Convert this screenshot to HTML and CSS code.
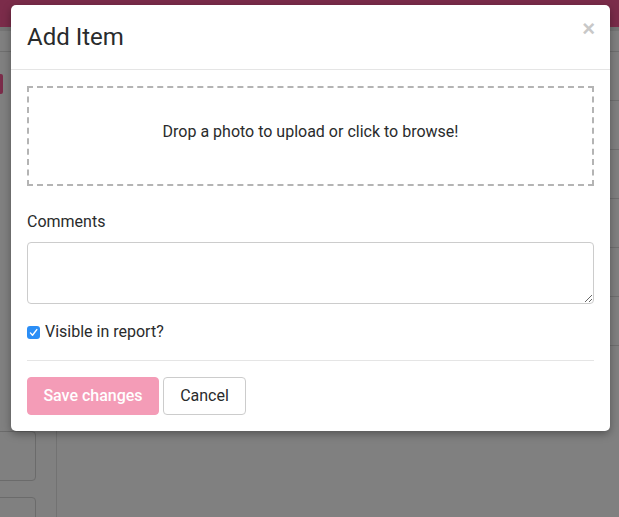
FILE: index.html
```html
<!DOCTYPE html>
<html lang="en">
<head>
<meta charset="utf-8">
<title>Add Item</title>
<link rel="stylesheet" href="styles.css">
</head>
<body>
<div class="app">
  <div class="topbar"></div>
  <div class="subbar"></div>
  <div class="main">
    <aside class="sidebar">
      <div class="side-top"></div>
      <div class="side-btn"></div>
      <div class="side-spacer"></div>
      <div class="side-card"></div>
      <div class="side-card"></div>
    </aside>
    <section class="content">
      <div class="row"></div>
      <div class="row"></div>
      <div class="row"></div>
      <div class="row"></div>
      <div class="row"></div>
      <div class="row"></div>
      <div class="row"></div>
    </section>
  </div>
</div>

<div class="modal">
  <div class="modal-header">
    <h4 class="modal-title">Add Item</h4>
    <span class="close">&times;</span>
  </div>
  <div class="modal-body">
    <div class="dropzone">Drop a photo to upload or click to browse!</div>
    <div class="form-group">
      <label class="label" for="comments">Comments</label>
      <textarea id="comments" class="textarea"></textarea>
    </div>
    <label class="check-row">
      <span class="checkbox"><svg viewBox="0 0 13 13" width="13" height="13"><path d="M3.4 6.9 L5.5 9.2 L9.8 3.6" fill="none" stroke="#fff" stroke-width="1.4" stroke-linecap="round" stroke-linejoin="round"/></svg></span>
      <span>Visible in report?</span>
    </label>
    <hr class="divider">
    <div class="actions">
      <button class="btn btn-primary" type="button">Save changes</button>
      <button class="btn btn-default" type="button">Cancel</button>
    </div>
  </div>
</div>
</body>
</html>
```

FILE: styles.css
```css
* { box-sizing: border-box; }
html, body { margin: 0; padding: 0; }
body {
  width: 619px;
  height: 517px;
  overflow: hidden;
  background: #808080;
  font-family: Roboto, "Liberation Sans", sans-serif;
  color: #292b2c;
  font-size: 16px;
  line-height: 1.5;
}
.app { display: flex; flex-direction: column; height: 517px; overflow: hidden; }
.topbar { height: 27px; background: #7b2c4a; flex: none; }
.subbar { height: 4px; background: #757575; flex: none; }
.main { display: flex; flex: 1; min-height: 0; overflow: hidden; }
.sidebar {
  width: 57px;
  flex: none;
  border-right: 1px solid #727272;
  display: flex;
  flex-direction: column;
}
.side-top { height: 21px; border-bottom: 1px solid #6f6f6f; width: 12px; flex: none; }
.side-btn { margin-top: 22px; height: 20px; width: 3px; background: #7b2c4a; border-radius: 0 2px 2px 0; flex: none; }
.side-spacer { height: 337px; flex: none; }
.side-card {
  flex: none;
  margin-left: -6px;
  width: 42px;
  height: 50px;
  border: 1px solid #6b6b6b;
  border-radius: 4px;
  margin-bottom: 16px;
}
.content { flex: 1; display: flex; flex-direction: column; }
.row { height: 49px; border-top: 1px solid #6f6f6f; flex: none; }
.row:first-child { margin-top: 20px; }

.modal {
  position: absolute;
  left: 11px;
  top: 5px;
  width: 599px;
  background: #fff;
  border-radius: 5px;
  box-shadow: 0 3px 9px rgba(0, 0, 0, 0.35);
}
.modal-header {
  display: flex;
  align-items: flex-start;
  justify-content: space-between;
  padding: 16px;
  border-bottom: 1px solid #e5e5e5;
}
.modal-title {
  margin: 0;
  font-size: 24px;
  font-weight: 400;
  line-height: 32px;
  color: #292b2c;
}
.close {
  font-size: 22px;
  line-height: 16px;
  font-weight: 700;
  color: #c8c8c8;
  margin-top: 0;
  margin-right: -1px;
  font-family: "Liberation Sans", sans-serif;
}
.modal-body { padding: 16px; }
.dropzone {
  height: 100px;
  border: 2px dashed #b4b4b4;
  display: flex;
  align-items: center;
  justify-content: center;
  padding-bottom: 8px;
  font-size: 16px;
  color: #292b2c;
}
.form-group { margin-top: 24px; }
.label { display: block; margin-bottom: 8px; font-size: 16px; line-height: 24px; }
.textarea {
  display: block;
  width: 100%;
  height: 62px;
  border: 1px solid #cccccc;
  border-radius: 4px;
  resize: vertical;
  font: inherit;
}
.check-row {
  display: flex;
  align-items: center;
  gap: 5px;
  margin-top: 16px;
  font-size: 16px;
  line-height: 24px;
}
.checkbox {
  width: 13px;
  height: 13px;
  border-radius: 3px;
  background: #2b8ef6;
  display: flex;
}
.divider { border: 0; border-top: 1px solid #e5e5e5; margin: 16px 0 16px; }
.actions { display: flex; gap: 4px; }
.btn {
  height: 38px;
  padding: 0 15px;
  border-radius: 4px;
  font-family: Roboto, "Liberation Sans", sans-serif;
  font-size: 16px;
  line-height: 20px;
  cursor: pointer;
}
.btn-primary {
  background: #f49cb7;
  border: 1px solid #f49cb7;
  color: #fff;
  font-weight: 500;
  width: 132px;
}
.btn-default {
  background: #fff;
  border: 1px solid #cccccc;
  color: #292b2c;
  width: 83px;
}
```
